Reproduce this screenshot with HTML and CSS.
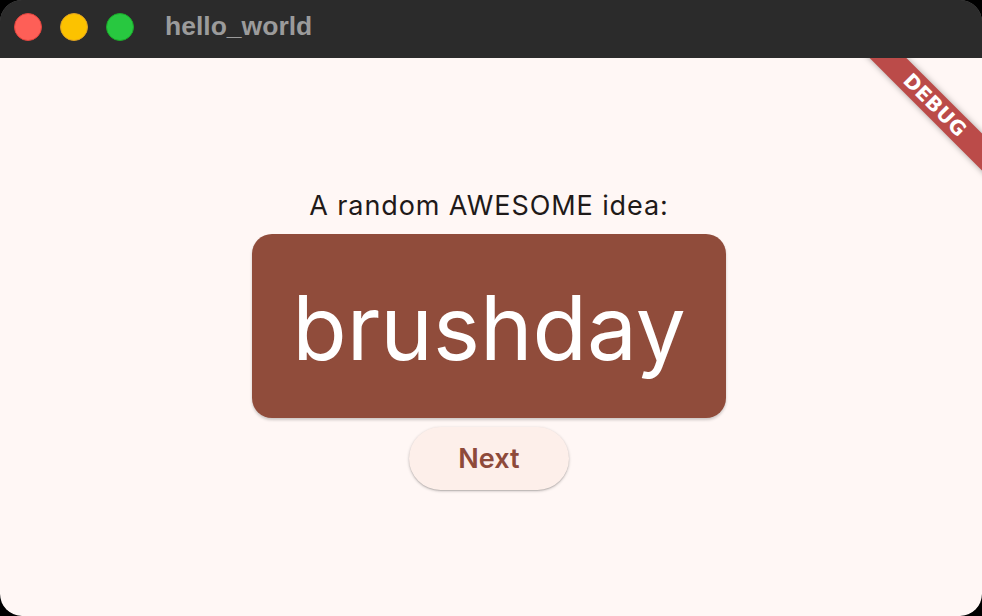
FILE: index.html
```html
<!DOCTYPE html>
<html>
<head>
<meta charset="utf-8">
<link rel="stylesheet" href="styles.css">
</head>
<body>
<div class="window">
  <div class="titlebar">
    <div class="lights">
      <span class="light red"></span>
      <span class="light yellow"></span>
      <span class="light green"></span>
    </div>
    <div class="title">hello_world</div>
  </div>
  <div class="content">
    <div class="stack">
      <div class="caption">A random AWESOME idea:</div>
      <div class="card"><span class="word">brushday</span></div>
      <button class="next">Next</button>
    </div>
    <div class="banner">DEBUG</div>
  </div>
</div>
</body>
</html>
```
FILE: styles.css
```css
html, body {
  margin: 0;
  padding: 0;
  background: #000;
  width: 982px;
  height: 616px;
  overflow: hidden;
}
.window {
  width: 982px;
  height: 616px;
  border-radius: 22px;
  overflow: hidden;
  display: flex;
  flex-direction: column;
  background: #2b2b2b;
  box-shadow: inset 0 0 0 1px #555;
}
.titlebar {
  height: 58px;
  flex: none;
  display: flex;
  align-items: center;
  background: #2b2b2b;
  font-family: "Liberation Sans", Arial, sans-serif;
}
.lights {
  display: flex;
  gap: 18px;
  padding-left: 14px;
  margin-top: -5px;
}
.light {
  width: 28px;
  height: 28px;
  border-radius: 50%;
  display: block;
  box-sizing: border-box;
}
.red { background: #fe5f57; border: 1px solid #e0443e; }
.yellow { background: #fcc200; border: 1px solid #dea123; }
.green { background: #28c840; border: 1px solid #1aab29; }
.title {
  margin-left: 31px;
  margin-top: -5px;
  color: #9b9b9b;
  font-weight: bold;
  font-size: 26.5px;
}
.content {
  flex: 1;
  position: relative;
  background: #fff7f5;
  border-radius: 0 0 22px 22px;
  overflow: hidden;
  display: flex;
  align-items: center;
  justify-content: center;
  font-family: Inter, Roboto, sans-serif;
}
.stack {
  display: flex;
  flex-direction: column;
  align-items: center;
  margin-top: 4px;
  margin-right: 4px;
}
.caption {
  font-size: 27px;
  line-height: 34px;
  letter-spacing: 0.9px;
  color: #1f1a19;
  margin-bottom: 11px;
}
.card {
  background: #904c3b;
  border-radius: 20px;
  height: 184px;
  padding: 0 40px;
  display: flex;
  align-items: center;
  box-shadow: 0 2px 3px rgba(0,0,0,0.2);
}
.word {
  color: #fff;
  font-size: 89px;
  margin-top: 4px;
}
.next {
  margin-top: 9px;
  width: 160px;
  height: 63px;
  border: none;
  border-radius: 32px;
  background: #fdefea;
  color: #8e4a3a;
  font-family: Inter, Roboto, sans-serif;
  font-weight: 600;
  font-size: 27px;
  box-shadow: 0 1px 3px rgba(0,0,0,0.25), 0 1px 1px rgba(0,0,0,0.1);
}
.banner {
  position: absolute;
  top: 34px;
  right: -63px;
  width: 220px;
  height: 26px;
  background: #bb4b49;
  color: #fff;
  font-family: "DejaVu Sans", sans-serif;
  font-weight: bold;
  font-size: 20px;
  line-height: 26px;
  text-align: center;
  letter-spacing: 0.3px;
  transform: rotate(45deg);
  box-shadow: 0 0 6px rgba(0,0,0,0.35);
}
```
